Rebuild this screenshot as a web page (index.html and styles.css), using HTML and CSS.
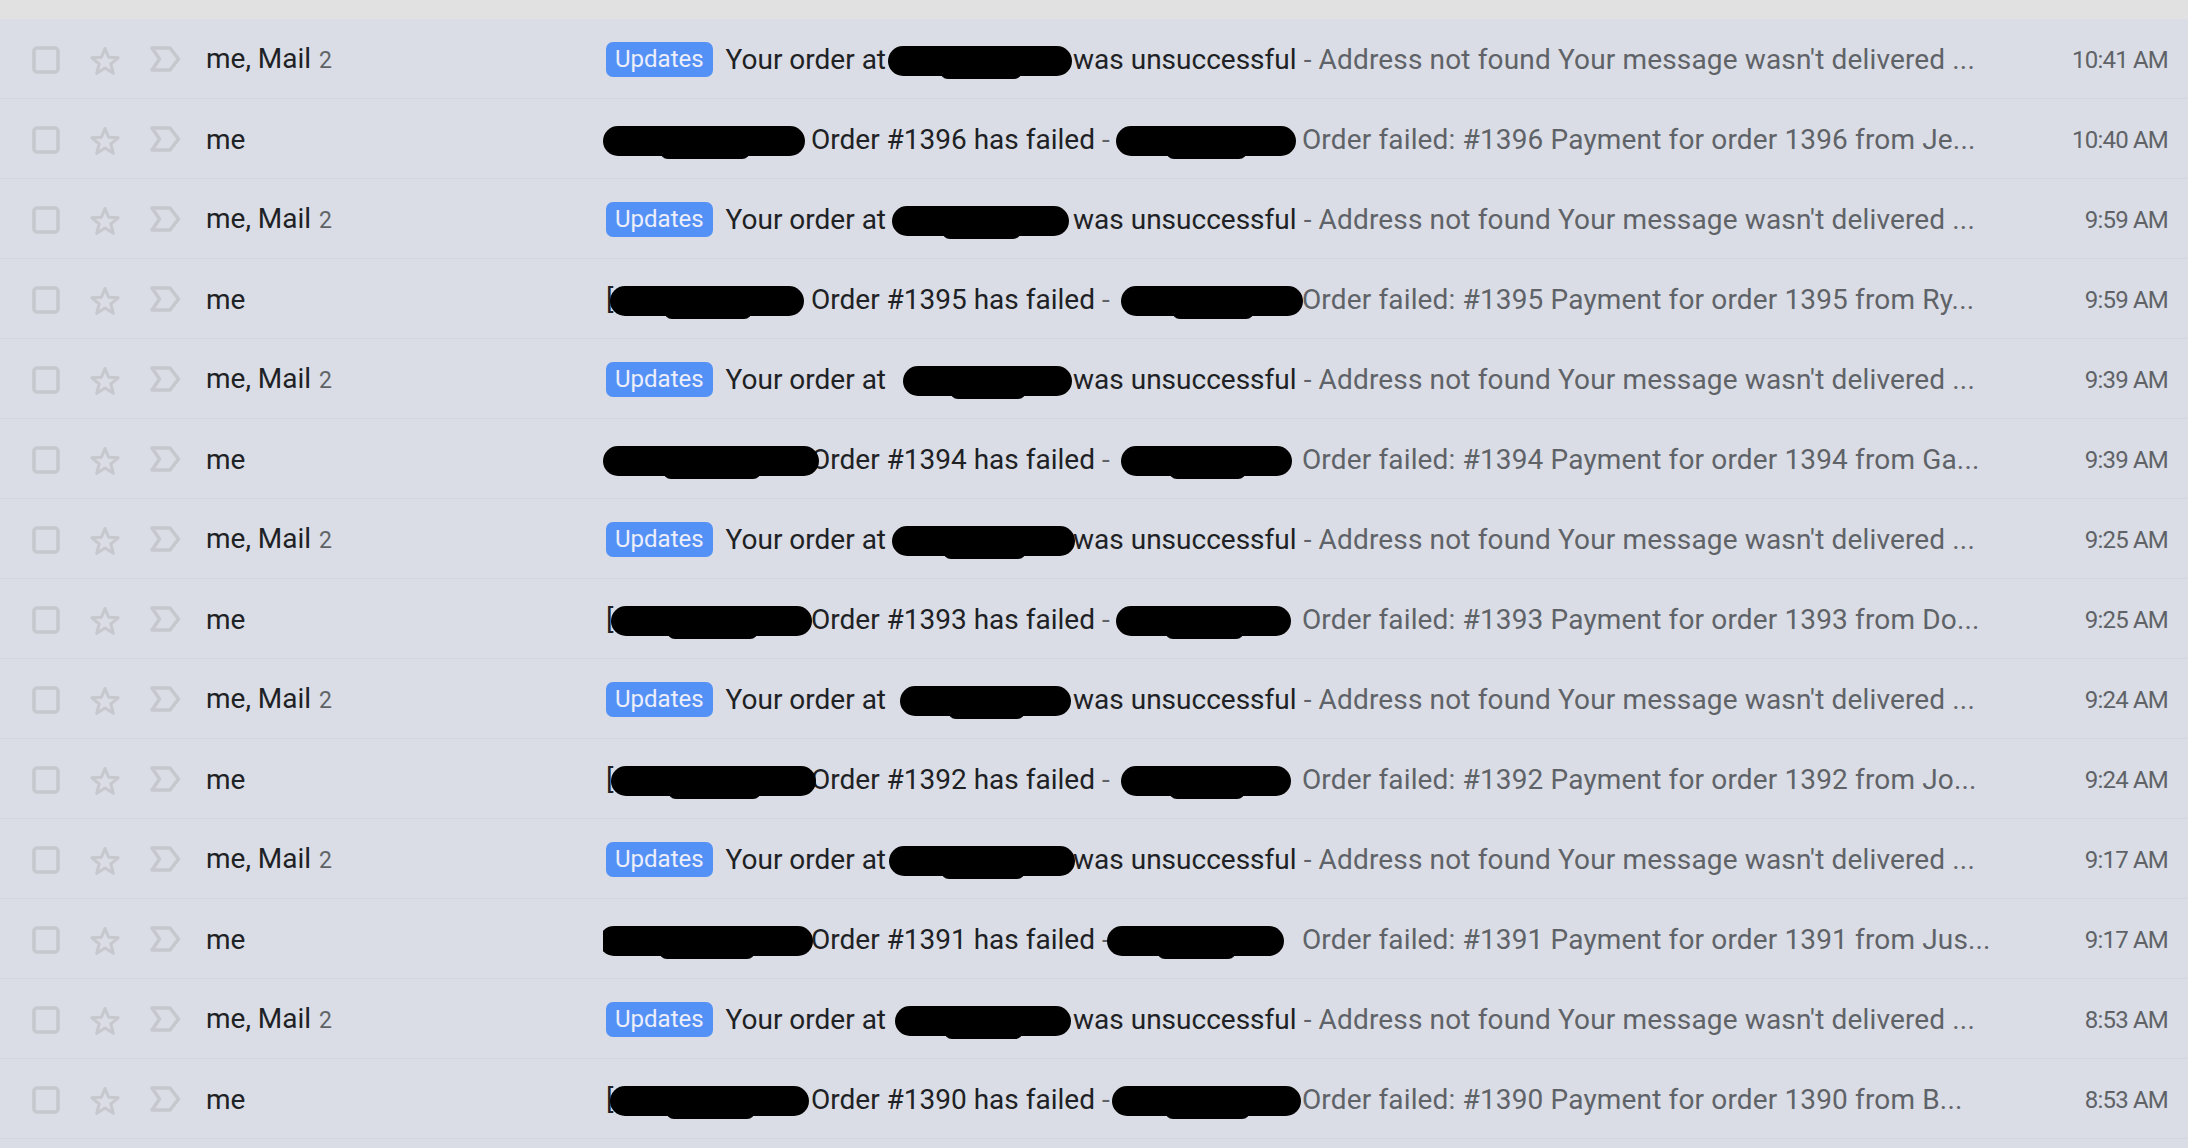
FILE: index.html
```html
<!DOCTYPE html>
<html lang="en">
<head>
<meta charset="utf-8">
<title>Inbox</title>
<link rel="stylesheet" href="styles.css">
</head>
<body>
<div class="topbar"></div>
<div class="list">

  <div class="row">
    <span class="icon cb"><svg width="28" height="28" viewBox="0 0 28 28"><rect x="2" y="2" width="24" height="24" rx="3"/></svg></span>
    <span class="icon star"><svg width="32" height="30" viewBox="0 0 32 30"><polygon points="16,2.5 19.6,11.3 29.2,11.8 21.8,17.9 24.3,27.3 16,22 7.7,27.3 10.2,17.9 2.8,11.8 12.4,11.3"/></svg></span>
    <span class="icon imp"><svg width="31" height="26" viewBox="0 0 31 26"><polygon points="2,2 20,2 28.5,13 20,24 2,24 9.5,13"/></svg></span>
    <div class="sender">me, Mail <span class="count">2</span></div>
    <div class="content"><span class="badge">Updates</span><span class="subject">Your order at<span class="store"><span class="ink u1"></span></span>was unsuccessful</span><span class="snippet"> - Address not found Your message wasn't delivered ...</span></div>
    <div class="date">10:41 AM</div>
  </div>

  <div class="row">
    <span class="icon cb"><svg width="28" height="28" viewBox="0 0 28 28"><rect x="2" y="2" width="24" height="24" rx="3"/></svg></span>
    <span class="icon star"><svg width="32" height="30" viewBox="0 0 32 30"><polygon points="16,2.5 19.6,11.3 29.2,11.8 21.8,17.9 24.3,27.3 16,22 7.7,27.3 10.2,17.9 2.8,11.8 12.4,11.3"/></svg></span>
    <span class="icon imp"><svg width="31" height="26" viewBox="0 0 31 26"><polygon points="2,2 20,2 28.5,13 20,24 2,24 9.5,13"/></svg></span>
    <div class="sender">me</div>
    <div class="content"><span class="subject"><span class="tag"><span class="ink a2"></span></span>Order #1396 has failed</span><span class="snippet"> -<span class="from"><span class="ink b2"></span></span>Order failed: #1396 Payment for order 1396 from Je...</span></div>
    <div class="date">10:40 AM</div>
  </div>

  <div class="row">
    <span class="icon cb"><svg width="28" height="28" viewBox="0 0 28 28"><rect x="2" y="2" width="24" height="24" rx="3"/></svg></span>
    <span class="icon star"><svg width="32" height="30" viewBox="0 0 32 30"><polygon points="16,2.5 19.6,11.3 29.2,11.8 21.8,17.9 24.3,27.3 16,22 7.7,27.3 10.2,17.9 2.8,11.8 12.4,11.3"/></svg></span>
    <span class="icon imp"><svg width="31" height="26" viewBox="0 0 31 26"><polygon points="2,2 20,2 28.5,13 20,24 2,24 9.5,13"/></svg></span>
    <div class="sender">me, Mail <span class="count">2</span></div>
    <div class="content"><span class="badge">Updates</span><span class="subject">Your order at<span class="store"><span class="ink u3"></span></span>was unsuccessful</span><span class="snippet"> - Address not found Your message wasn't delivered ...</span></div>
    <div class="date">9:59 AM</div>
  </div>

  <div class="row">
    <span class="icon cb"><svg width="28" height="28" viewBox="0 0 28 28"><rect x="2" y="2" width="24" height="24" rx="3"/></svg></span>
    <span class="icon star"><svg width="32" height="30" viewBox="0 0 32 30"><polygon points="16,2.5 19.6,11.3 29.2,11.8 21.8,17.9 24.3,27.3 16,22 7.7,27.3 10.2,17.9 2.8,11.8 12.4,11.3"/></svg></span>
    <span class="icon imp"><svg width="31" height="26" viewBox="0 0 31 26"><polygon points="2,2 20,2 28.5,13 20,24 2,24 9.5,13"/></svg></span>
    <div class="sender">me</div>
    <div class="content"><span class="subject"><span class="tag"><span class="brk">[</span><span class="ink a4"></span></span>Order #1395 has failed</span><span class="snippet"> -<span class="from"><span class="ink b4"></span></span>Order failed: #1395 Payment for order 1395 from Ry...</span></div>
    <div class="date">9:59 AM</div>
  </div>

  <div class="row">
    <span class="icon cb"><svg width="28" height="28" viewBox="0 0 28 28"><rect x="2" y="2" width="24" height="24" rx="3"/></svg></span>
    <span class="icon star"><svg width="32" height="30" viewBox="0 0 32 30"><polygon points="16,2.5 19.6,11.3 29.2,11.8 21.8,17.9 24.3,27.3 16,22 7.7,27.3 10.2,17.9 2.8,11.8 12.4,11.3"/></svg></span>
    <span class="icon imp"><svg width="31" height="26" viewBox="0 0 31 26"><polygon points="2,2 20,2 28.5,13 20,24 2,24 9.5,13"/></svg></span>
    <div class="sender">me, Mail <span class="count">2</span></div>
    <div class="content"><span class="badge">Updates</span><span class="subject">Your order at<span class="store"><span class="ink u5"></span></span>was unsuccessful</span><span class="snippet"> - Address not found Your message wasn't delivered ...</span></div>
    <div class="date">9:39 AM</div>
  </div>

  <div class="row">
    <span class="icon cb"><svg width="28" height="28" viewBox="0 0 28 28"><rect x="2" y="2" width="24" height="24" rx="3"/></svg></span>
    <span class="icon star"><svg width="32" height="30" viewBox="0 0 32 30"><polygon points="16,2.5 19.6,11.3 29.2,11.8 21.8,17.9 24.3,27.3 16,22 7.7,27.3 10.2,17.9 2.8,11.8 12.4,11.3"/></svg></span>
    <span class="icon imp"><svg width="31" height="26" viewBox="0 0 31 26"><polygon points="2,2 20,2 28.5,13 20,24 2,24 9.5,13"/></svg></span>
    <div class="sender">me</div>
    <div class="content"><span class="subject"><span class="tag"><span class="ink a6"></span></span>Order #1394 has failed</span><span class="snippet"> -<span class="from"><span class="ink b6"></span></span>Order failed: #1394 Payment for order 1394 from Ga...</span></div>
    <div class="date">9:39 AM</div>
  </div>

  <div class="row">
    <span class="icon cb"><svg width="28" height="28" viewBox="0 0 28 28"><rect x="2" y="2" width="24" height="24" rx="3"/></svg></span>
    <span class="icon star"><svg width="32" height="30" viewBox="0 0 32 30"><polygon points="16,2.5 19.6,11.3 29.2,11.8 21.8,17.9 24.3,27.3 16,22 7.7,27.3 10.2,17.9 2.8,11.8 12.4,11.3"/></svg></span>
    <span class="icon imp"><svg width="31" height="26" viewBox="0 0 31 26"><polygon points="2,2 20,2 28.5,13 20,24 2,24 9.5,13"/></svg></span>
    <div class="sender">me, Mail <span class="count">2</span></div>
    <div class="content"><span class="badge">Updates</span><span class="subject">Your order at<span class="store"><span class="ink u7"></span></span>was unsuccessful</span><span class="snippet"> - Address not found Your message wasn't delivered ...</span></div>
    <div class="date">9:25 AM</div>
  </div>

  <div class="row">
    <span class="icon cb"><svg width="28" height="28" viewBox="0 0 28 28"><rect x="2" y="2" width="24" height="24" rx="3"/></svg></span>
    <span class="icon star"><svg width="32" height="30" viewBox="0 0 32 30"><polygon points="16,2.5 19.6,11.3 29.2,11.8 21.8,17.9 24.3,27.3 16,22 7.7,27.3 10.2,17.9 2.8,11.8 12.4,11.3"/></svg></span>
    <span class="icon imp"><svg width="31" height="26" viewBox="0 0 31 26"><polygon points="2,2 20,2 28.5,13 20,24 2,24 9.5,13"/></svg></span>
    <div class="sender">me</div>
    <div class="content"><span class="subject"><span class="tag"><span class="brk">[</span><span class="ink a8"></span></span>Order #1393 has failed</span><span class="snippet"> -<span class="from"><span class="ink b8"></span></span>Order failed: #1393 Payment for order 1393 from Do...</span></div>
    <div class="date">9:25 AM</div>
  </div>

  <div class="row">
    <span class="icon cb"><svg width="28" height="28" viewBox="0 0 28 28"><rect x="2" y="2" width="24" height="24" rx="3"/></svg></span>
    <span class="icon star"><svg width="32" height="30" viewBox="0 0 32 30"><polygon points="16,2.5 19.6,11.3 29.2,11.8 21.8,17.9 24.3,27.3 16,22 7.7,27.3 10.2,17.9 2.8,11.8 12.4,11.3"/></svg></span>
    <span class="icon imp"><svg width="31" height="26" viewBox="0 0 31 26"><polygon points="2,2 20,2 28.5,13 20,24 2,24 9.5,13"/></svg></span>
    <div class="sender">me, Mail <span class="count">2</span></div>
    <div class="content"><span class="badge">Updates</span><span class="subject">Your order at<span class="store"><span class="ink u9"></span></span>was unsuccessful</span><span class="snippet"> - Address not found Your message wasn't delivered ...</span></div>
    <div class="date">9:24 AM</div>
  </div>

  <div class="row">
    <span class="icon cb"><svg width="28" height="28" viewBox="0 0 28 28"><rect x="2" y="2" width="24" height="24" rx="3"/></svg></span>
    <span class="icon star"><svg width="32" height="30" viewBox="0 0 32 30"><polygon points="16,2.5 19.6,11.3 29.2,11.8 21.8,17.9 24.3,27.3 16,22 7.7,27.3 10.2,17.9 2.8,11.8 12.4,11.3"/></svg></span>
    <span class="icon imp"><svg width="31" height="26" viewBox="0 0 31 26"><polygon points="2,2 20,2 28.5,13 20,24 2,24 9.5,13"/></svg></span>
    <div class="sender">me</div>
    <div class="content"><span class="subject"><span class="tag"><span class="brk">[</span><span class="ink a10"></span></span>Order #1392 has failed</span><span class="snippet"> -<span class="from"><span class="ink b10"></span></span>Order failed: #1392 Payment for order 1392 from Jo...</span></div>
    <div class="date">9:24 AM</div>
  </div>

  <div class="row">
    <span class="icon cb"><svg width="28" height="28" viewBox="0 0 28 28"><rect x="2" y="2" width="24" height="24" rx="3"/></svg></span>
    <span class="icon star"><svg width="32" height="30" viewBox="0 0 32 30"><polygon points="16,2.5 19.6,11.3 29.2,11.8 21.8,17.9 24.3,27.3 16,22 7.7,27.3 10.2,17.9 2.8,11.8 12.4,11.3"/></svg></span>
    <span class="icon imp"><svg width="31" height="26" viewBox="0 0 31 26"><polygon points="2,2 20,2 28.5,13 20,24 2,24 9.5,13"/></svg></span>
    <div class="sender">me, Mail <span class="count">2</span></div>
    <div class="content"><span class="badge">Updates</span><span class="subject">Your order at<span class="store"><span class="ink u11"></span></span>was unsuccessful</span><span class="snippet"> - Address not found Your message wasn't delivered ...</span></div>
    <div class="date">9:17 AM</div>
  </div>

  <div class="row">
    <span class="icon cb"><svg width="28" height="28" viewBox="0 0 28 28"><rect x="2" y="2" width="24" height="24" rx="3"/></svg></span>
    <span class="icon star"><svg width="32" height="30" viewBox="0 0 32 30"><polygon points="16,2.5 19.6,11.3 29.2,11.8 21.8,17.9 24.3,27.3 16,22 7.7,27.3 10.2,17.9 2.8,11.8 12.4,11.3"/></svg></span>
    <span class="icon imp"><svg width="31" height="26" viewBox="0 0 31 26"><polygon points="2,2 20,2 28.5,13 20,24 2,24 9.5,13"/></svg></span>
    <div class="sender">me</div>
    <div class="content"><span class="subject"><span class="tag"><span class="ink a12"></span></span>Order #1391 has failed</span><span class="snippet"> -<span class="from"><span class="ink b12"></span></span>Order failed: #1391 Payment for order 1391 from Jus...</span></div>
    <div class="date">9:17 AM</div>
  </div>

  <div class="row">
    <span class="icon cb"><svg width="28" height="28" viewBox="0 0 28 28"><rect x="2" y="2" width="24" height="24" rx="3"/></svg></span>
    <span class="icon star"><svg width="32" height="30" viewBox="0 0 32 30"><polygon points="16,2.5 19.6,11.3 29.2,11.8 21.8,17.9 24.3,27.3 16,22 7.7,27.3 10.2,17.9 2.8,11.8 12.4,11.3"/></svg></span>
    <span class="icon imp"><svg width="31" height="26" viewBox="0 0 31 26"><polygon points="2,2 20,2 28.5,13 20,24 2,24 9.5,13"/></svg></span>
    <div class="sender">me, Mail <span class="count">2</span></div>
    <div class="content"><span class="badge">Updates</span><span class="subject">Your order at<span class="store"><span class="ink u13"></span></span>was unsuccessful</span><span class="snippet"> - Address not found Your message wasn't delivered ...</span></div>
    <div class="date">8:53 AM</div>
  </div>

  <div class="row">
    <span class="icon cb"><svg width="28" height="28" viewBox="0 0 28 28"><rect x="2" y="2" width="24" height="24" rx="3"/></svg></span>
    <span class="icon star"><svg width="32" height="30" viewBox="0 0 32 30"><polygon points="16,2.5 19.6,11.3 29.2,11.8 21.8,17.9 24.3,27.3 16,22 7.7,27.3 10.2,17.9 2.8,11.8 12.4,11.3"/></svg></span>
    <span class="icon imp"><svg width="31" height="26" viewBox="0 0 31 26"><polygon points="2,2 20,2 28.5,13 20,24 2,24 9.5,13"/></svg></span>
    <div class="sender">me</div>
    <div class="content"><span class="subject"><span class="tag"><span class="brk">[</span><span class="ink a14"></span></span>Order #1390 has failed</span><span class="snippet"> -<span class="from"><span class="ink b14"></span></span>Order failed: #1390 Payment for order 1390 from B...</span></div>
    <div class="date">8:53 AM</div>
  </div>

</div>
</body>
</html>
```
FILE: styles.css
```css
html, body {
  margin: 0;
  padding: 0;
}

body {
  background: #dadde5;
  font-family: Roboto, "Noto Sans", "Liberation Sans", sans-serif;
  color: #202124;
  overflow: hidden;
}

.topbar {
  height: 19px;
  background: #e1e1e1;
}

.list {
  display: flex;
  flex-direction: column;
}

/* one message row */
.row {
  display: flex;
  align-items: center;
  height: 79px;
  border-bottom: 1px solid #d3d6de;
  padding-left: 32px;
  white-space: nowrap;
}

.icon {
  display: flex;
  flex: none;
}

.icon svg {
  display: block;
  fill: none;
  stroke: #c6c8ce;
}

.cb {
  margin-top: 2px;
}

.cb svg {
  stroke-width: 3.5;
}

.star {
  margin-left: 29px;
  margin-top: 4px;
}

.star svg {
  stroke-width: 3;
  stroke-linejoin: round;
}

.imp {
  margin-left: 29px;
  margin-top: 1px;
}

.imp svg {
  stroke-width: 3.5;
  stroke-linejoin: round;
}

.sender,
.content,
.date {
  padding-top: 3px;
}

.sender {
  flex: 0 0 397px;
  margin-left: 25px;
  font-size: 28px;
  line-height: 40px;
  color: #202124;
}

.count {
  font-size: 23px;
  color: #5f6368;
  margin-left: 1px;
}

.content {
  flex: 1 1 auto;
  min-width: 0;
  overflow: hidden;
  font-size: 28px;
  line-height: 40px;
  height: 40px;
}

.badge {
  display: inline-block;
  vertical-align: top;
  margin-top: 2px;
  margin-left: 3px;
  margin-right: 13px;
  height: 35px;
  line-height: 35px;
  padding: 0 9px;
  border-radius: 7px;
  background: #5391f6;
  color: #eceef9;
  font-size: 24px;
}

.subject {
  color: #202124;
}

.snippet {
  color: #5f6368;
  letter-spacing: 0.15px;
}

/* redacted fragments: a fixed slot with a marker stroke over it */
.store,
.tag,
.from {
  display: inline-block;
  vertical-align: top;
  height: 40px;
  position: relative;
}

.store { width: 187px; }
.tag { width: 208px; }
.from { width: 192px; }

.brk {
  position: absolute;
  left: 3px;
  top: 0;
  line-height: 40px;
  color: #202124;
}

.ink {
  position: absolute;
  top: 6px;
  height: 30px;
  border-radius: 15px;
  background: #000;
  z-index: 1;
}

.ink::after {
  content: "";
  position: absolute;
  left: 28%;
  bottom: -3px;
  width: 45%;
  height: 16px;
  border-radius: 8px;
  background: #000;
}

.u1 { left: 2px; width: 184px; }
.u3 { left: 6px; width: 177px; }
.u5 { left: 17px; width: 169px; }
.u7 { left: 6px; width: 183px; }
.u9 { left: 14px; width: 171px; }
.u11 { left: 3px; width: 186px; }
.u13 { left: 9px; width: 176px; }

.a2 { left: 0; width: 202px; }
.a4 { left: 7px; width: 194px; }
.a6 { left: 0; width: 216px; }
.a8 { left: 8px; width: 201px; }
.a10 { left: 8px; width: 205px; }
.a12 { left: -4px; width: 214px; }
.a14 { left: 7px; width: 199px; }

.b2 { left: 6px; width: 180px; }
.b4 { left: 11px; width: 182px; }
.b6 { left: 11px; width: 171px; }
.b8 { left: 6px; width: 175px; }
.b10 { left: 11px; width: 170px; }
.b12 { left: -3px; width: 177px; }
.b14 { left: 2px; width: 189px; }

.date {
  flex: none;
  margin-left: 40px;
  padding-right: 20px;
  font-size: 24px;
  line-height: 40px;
  letter-spacing: -0.8px;
  color: #5f6368;
  text-align: right;
}
```
